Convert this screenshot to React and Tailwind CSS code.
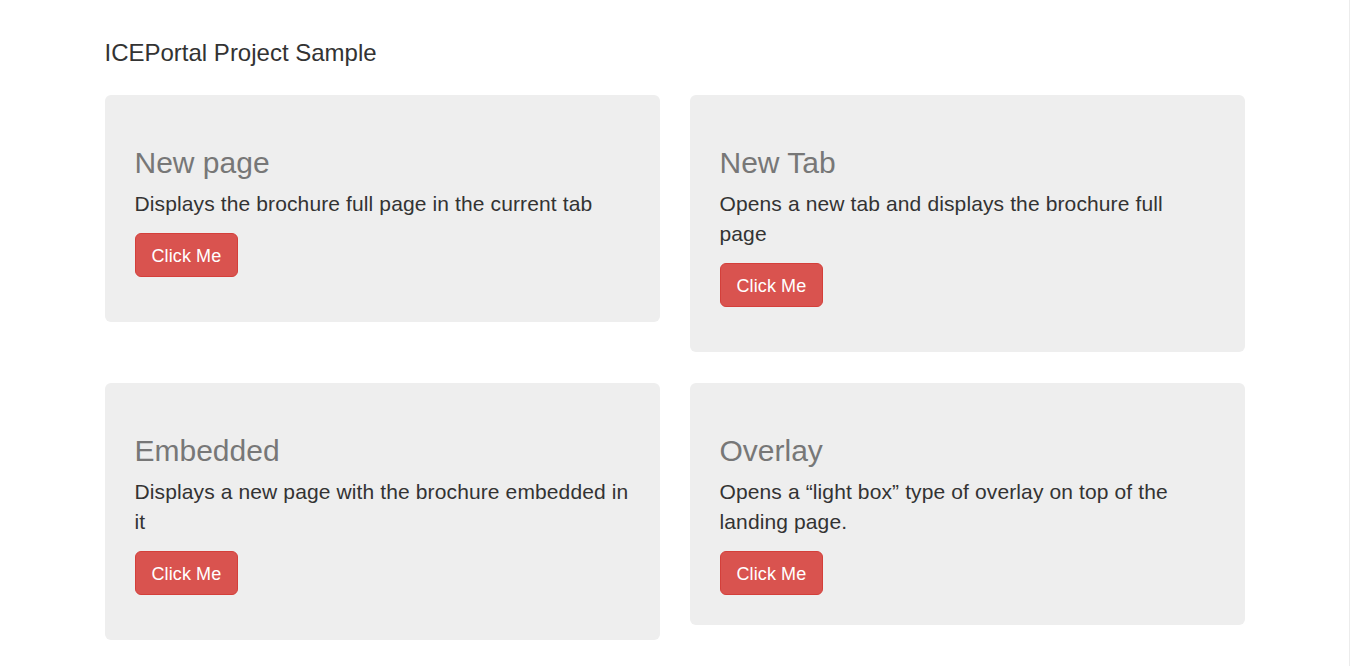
import React from 'react';

const cards = [
  {
    title: 'New page',
    text: 'Displays the brochure full page in the current tab',
    wrapped: true,
  },
  {
    title: 'New Tab',
    text: 'Opens a new tab and displays the brochure full page',
    wrapped: true,
  },
  {
    title: 'Embedded',
    text: 'Displays a new page with the brochure embedded in it',
    wrapped: true,
  },
  {
    title: 'Overlay',
    text: 'Opens a \u201clight box\u201d type of overlay on top of the landing page.',
    wrapped: false,
  },
];

const ClickButton = () => (
  <button className="h-[44px] px-4 pt-px rounded-[6px] border border-[#d43f3a] bg-[#d9534f] text-white text-[18px] leading-[22px] tracking-[0.1px]">
    Click Me
  </button>
);

const Card = ({ title, text, wrapped }) => (
  <div className="bg-[#eeeeee] rounded-[6px] px-[30px] pt-[30px] pb-[30px]">
    <h2 className="mt-[21px] mb-[10px] text-[30px] leading-[33px] text-[#777777]">{title}</h2>
    <p className="mb-[14px] text-[21px] leading-[30px] tracking-[0.12px] text-[#333333]">{text}</p>
    {wrapped ? (
      <p className="mb-[15px]">
        <ClickButton />
      </p>
    ) : (
      <ClickButton />
    )}
  </div>
);

export default function App() {
  return (
    <div className="flex min-h-screen bg-white font-['Liberation_Sans',Arial,sans-serif]">
      <main className="flex-1">
        <div className="w-[1140px] mx-auto pt-[40px]">
          <h3 className="text-[24px] leading-[26px] text-[#333333]">ICEPortal Project Sample</h3>
          <div className="grid grid-cols-2 gap-x-[30px] gap-y-[31px] items-start mt-[29px]">
            {cards.map(card => (
              <Card key={card.title} {...card} />
            ))}
          </div>
        </div>
      </main>
      <div className="w-px bg-[#ececec]" />
    </div>
  );
}
